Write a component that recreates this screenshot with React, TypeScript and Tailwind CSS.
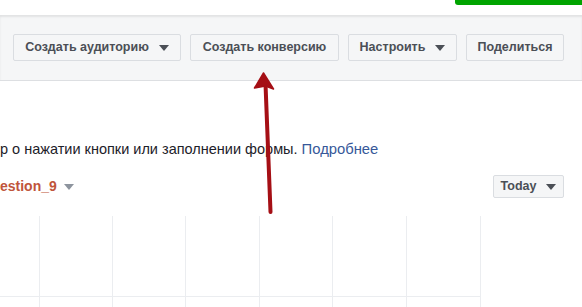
import React from "react";

function Caret({ className = "" }: { className?: string }) {
  return (
    <svg width="10" height="6" viewBox="0 0 10 6" className={className}>
      <path d="M0 0h10L5 6z" fill="currentColor" />
    </svg>
  );
}

function ToolButton({ label, caret, w }: { label: string; caret?: boolean; w: string }) {
  return (
    <button
      className={`${w} h-[27px] flex items-center justify-center gap-[10px] rounded-[2px] border border-[#dadde1] bg-[#f5f6f7] text-[12.5px] font-bold text-[#4b4f56]`}
    >
      <span>{label}</span>
      {caret && <Caret className="text-[#4b4f56]" />}
    </button>
  );
}

export default function App() {
  const cols = [39, 112, 185, 259, 332, 406, 480];
  return (
    <div
      className="relative w-[582px] h-[307px] overflow-hidden bg-white"
      style={{ fontFamily: '"Liberation Sans", Arial, sans-serif' }}
    >
      {/* top strip */}
      <div className="h-[15px] bg-white flex justify-end">
        <div className="w-[127px] h-[5px] bg-[#00a400] rounded-bl-[3px]" />
      </div>

      {/* toolbar */}
      <div className="h-[66px] bg-[#f5f6f7] border-b border-[#dddfe2] shadow-[inset_0_2px_2px_rgba(0,0,0,0.08)] flex items-start pt-[19px] pl-[13px] gap-[9px]">
        <ToolButton label="Создать аудиторию" caret w="w-[168px]" />
        <ToolButton label="Создать конверсию" w="w-[149px]" />
        <ToolButton label="Настроить" caret w="w-[109px]" />
        <ToolButton label="Поделиться" w="w-[98px]" />
      </div>

      {/* description */}
      <div className="mt-[59px] text-[14.5px] leading-[18px] text-[#1d2129] whitespace-nowrap">
        р о нажатии кнопки или заполнении формы.{" "}
        <span className="text-[#365899] text-[14.8px]">Подробнее</span>
      </div>

      {/* selector row */}
      <div className="mt-[17px] flex items-center justify-between pr-[18px]">
        <div className="flex items-center gap-[7px]">
          <span className="text-[14px] font-bold text-[#c0553b]">estion_9</span>
          <Caret className="text-[#8d949e]" />
        </div>
        <button className="h-[23px] w-[71px] flex items-center justify-center gap-[10px] rounded-[2px] border border-[#dadde1] bg-[#f5f6f7] text-[12.5px] font-bold text-[#4b4f56]">
          <span>Today</span>
          <Caret />
        </button>
      </div>

      {/* chart grid */}
      <div className="mt-[18px] relative h-[81px] w-[481px] border-b border-[#ebedf0]">
        {cols.map((x) => (
          <div
            key={x}
            className="absolute top-0 bottom-[-14px] w-px bg-[#ebedf0]"
            style={{ left: x }}
          />
        ))}
      </div>

      {/* annotation arrow */}
      <svg className="absolute left-0 top-0 pointer-events-none" width="582" height="307">
        <path d="M270.5 212 L265.5 84" stroke="#a50f15" strokeWidth="4" strokeLinecap="round" />
        <path d="M263.5 73 L273.5 89 L265.5 86 L254.5 88 Z" fill="#a50f15" stroke="#a50f15" strokeWidth="1.5" strokeLinejoin="round" />
      </svg>
    </div>
  );
}
